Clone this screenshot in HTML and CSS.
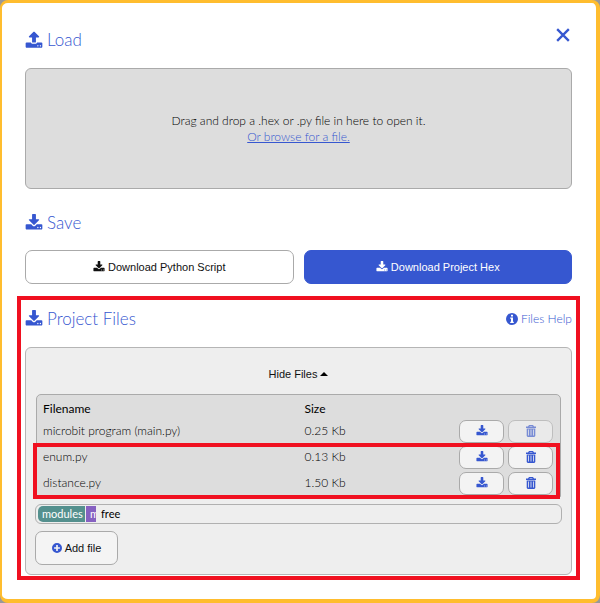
FILE: index.html
```
<!DOCTYPE html>
<html lang="en">
<head>
    <meta charset="UTF-8">
    <meta name="viewport" content="width=device-width, initial-scale=1.0">
    <title>Load / Save</title>
    <link rel="stylesheet" href="styles.css">
</head>
<body>
    <svg class="sprite" aria-hidden="true">
        <symbol id="download" viewBox="0 0 1792 1792">
            <path d="M1344 1344q0-26-19-45t-45-19-45 19-19 45 19 45 45 19 45-19 19-45zm256 0q0-26-19-45t-45-19-45 19-19 45 19 45 45 19 45-19 19-45zm128-224v320q0 40-28 68t-68 28h-1472q-40 0-68-28t-28-68v-320q0-40 28-68t68-28h465l135 136q58 56 136 56t136-56l136-136h464q40 0 68 28t28 68zm-325-569q17 41-14 70l-448 448q-18 19-45 19t-45-19l-448-448q-31-29-14-70 17-39 59-39h256v-448q0-26 19-45t45-19h256q26 0 45 19t19 45v448h256q42 0 59 39z"/>
        </symbol>
        <symbol id="upload" viewBox="0 0 1792 1792">
            <path d="M1344 1472q0-26-19-45t-45-19-45 19-19 45 19 45 45 19 45-19 19-45zm256 0q0-26-19-45t-45-19-45 19-19 45 19 45 45 19 45-19 19-45zm128-224v320q0 40-28 68t-68 28h-1472q-40 0-68-28t-28-68v-320q0-40 28-68t68-28h427q21 56 70.5 92t110.5 36h256q61 0 110.5-36t70.5-92h427q40 0 68 28t28 68zm-325-648q-17 40-59 40h-256v448q0 26-19 45t-45 19h-256q-26 0-45-19t-19-45v-448h-256q-42 0-59-40-17-39 14-69l448-448q18-19 45-19t45 19l448 448q31 30 14 69z"/>
        </symbol>
        <symbol id="trash" viewBox="0 0 12 12">
            <path fill-rule="evenodd" d="M4 0h4l1 1.6h2V3H1V1.6h2zM4.800 .9l-.4.7h3.200l-.4-.7zM1.700 3.400h8.600V11l-1 1H2.700l-1-1zM3.200 4.600v6H4v-6zM5.600 4.600v6h.8v-6zM8 4.600v6h.8v-6z"/>
        </symbol>
        <symbol id="info" viewBox="0 0 12 12">
            <path fill-rule="evenodd" d="M6 0a6 6 0 1 1 0 12A6 6 0 0 1 6 0zM5 1.800v1.700h2V1.800zM4.200 4.500v1.200H5v3h-.8V10h3.600V8.700H7V4.500z"/>
        </symbol>
        <symbol id="plus" viewBox="0 0 12 12">
            <path fill-rule="evenodd" d="M6 0a6 6 0 1 1 0 12A6 6 0 0 1 6 0zM5 2.500V5H2.500v2H5v2.500h2V7h2.500V5H7V2.500z"/>
        </symbol>
    </svg>

    <main class="modal">
        <button class="close" aria-label="Close">
            <svg viewBox="0 0 12 12"><path d="M1 1l10 10M11 1L1 11"/></svg>
        </button>

        <section>
            <h2><svg class="icon-lg"><use href="#upload"/></svg>Load</h2>
            <div class="drop-zone">
                <p>Drag and drop a .hex or .py file in here to open it.</p>
                <a href="#">Or browse for a file.</a>
            </div>
        </section>

        <section>
            <h2><svg class="icon-lg"><use href="#download"/></svg>Save</h2>
            <div class="save-buttons">
                <button class="btn"><svg class="icon"><use href="#download"/></svg>Download Python Script</button>
                <button class="btn btn-primary"><svg class="icon"><use href="#download"/></svg>Download Project Hex</button>
            </div>
        </section>

        <section class="project highlight">
            <div class="project-header">
                <h2><svg class="icon-lg"><use href="#download"/></svg>Project Files</h2>
                <a class="help" href="#"><svg class="icon"><use href="#info"/></svg>Files Help</a>
            </div>
            <div class="panel">
                <button class="toggle">Hide Files <span class="caret"></span></button>
                <div class="table-box">
                    <table>
                        <thead>
                            <tr><th class="name">Filename</th><th>Size</th><th class="actions"></th></tr>
                        </thead>
                        <tbody>
                            <tr>
                                <td>microbit program (main.py)</td>
                                <td>0.25 Kb</td>
                                <td class="actions"><div>
                                    <button aria-label="Download main.py"><svg class="icon"><use href="#download"/></svg></button>
                                    <button aria-label="Delete main.py" disabled><svg class="icon"><use href="#trash"/></svg></button>
                                </div></td>
                            </tr>
                        </tbody>
                        <tbody class="highlight">
                            <tr>
                                <td>enum.py</td>
                                <td>0.13 Kb</td>
                                <td class="actions"><div>
                                    <button aria-label="Download enum.py"><svg class="icon"><use href="#download"/></svg></button>
                                    <button aria-label="Delete enum.py"><svg class="icon"><use href="#trash"/></svg></button>
                                </div></td>
                            </tr>
                            <tr>
                                <td>distance.py</td>
                                <td>1.50 Kb</td>
                                <td class="actions"><div>
                                    <button aria-label="Download distance.py"><svg class="icon"><use href="#download"/></svg></button>
                                    <button aria-label="Delete distance.py"><svg class="icon"><use href="#trash"/></svg></button>
                                </div></td>
                            </tr>
                        </tbody>
                    </table>
                </div>
                <div class="storage">
                    <span class="modules">modules</span>
                    <span class="main">m</span>
                    <span class="free">free</span>
                </div>
                <button class="btn add"><svg class="icon"><use href="#plus"/></svg>Add file</button>
            </div>
        </section>
    </main>
</body>
</html>
```

FILE: styles.css
```
* {
    box-sizing: border-box;
}
body {
    margin: 0;
    background: #999;
    color: #000;
    font-family: Lato, "Open Sans", sans-serif;
    font-size: 12px;
    font-weight: 300;
    line-height: 16px;
}
.sprite {
    display: none;
}
.modal {
    position: relative;
    min-height: 100vh;
    padding: 24px 24px 23px 23px;
    background: #fff;
    border: solid #ffbd2e;
    border-width: 3px 4px 4px 2px;
    border-radius: 8px;
}
h2 {
    display: flex;
    align-items: center;
    gap: 4px;
    margin: 0;
    color: #3657d0;
    font-size: 17px;
    font-weight: 300;
    line-height: 26px;
}
a {
    color: #3657d0;
}
button {
    padding: 0;
    color: #111;
    font-family: "Liberation Sans", Arial, sans-serif;
    font-size: 11px;
    cursor: pointer;
}
.icon, .icon-lg {
    flex: none;
    width: 12px;
    height: 12px;
    fill: currentColor;
}
.icon-lg {
    width: 18px;
    height: 18px;
}
.close {
    position: absolute;
    top: 25px;
    right: 26px;
    width: 14px;
    height: 14px;
    background: none;
    border: 0;
}
.close svg {
    display: block;
    stroke: #3657d0;
    stroke-width: 2;
}
.drop-zone {
    display: flex;
    flex-direction: column;
    align-items: center;
    justify-content: center;
    height: 121px;
    margin: 15px 0 21px;
    background: #ddd;
    border: 1px solid #aaa;
    border-radius: 6px;
}
.drop-zone p {
    margin: 0;
}
.save-buttons {
    display: flex;
    gap: 10px;
    margin: 14px 0 22px;
}
.btn {
    display: flex;
    flex: 1;
    align-items: center;
    justify-content: center;
    gap: 3px;
    height: 34px;
    background: #fff;
    border: 1px solid #aaa;
    border-radius: 7px;
}
.btn-primary {
    background: #3657d0;
    border-color: #3657d0;
    color: #fff;
}

/* Red callout frames */
.highlight {
    position: relative;
}
.highlight::after {
    content: "";
    position: absolute;
    inset: -10px -8px -5px -8px;
    border: 4px solid #f01020;
    pointer-events: none;
}
tbody.highlight::after {
    inset: -1px 0 -3px -4px;
}

.project-header {
    display: flex;
    align-items: center;
    justify-content: space-between;
    margin-bottom: 15px;
}
.help {
    display: flex;
    align-items: center;
    gap: 3px;
    text-decoration: none;
}
.panel {
    padding: 15px 9px 9px;
    background: #eee;
    border: 1px solid #b5b5b5;
    border-radius: 6px;
}
.toggle {
    display: block;
    height: 22px;
    margin: 0 auto 9px;
    background: none;
    border: 0;
}
.caret {
    display: inline-block;
    border: 4px solid transparent;
    border-top: 0;
    border-bottom-color: #000;
    vertical-align: 2px;
}
.table-box {
    padding: 5px 0 0;
    margin: 0 1px;
    background: #ddd;
    border: 1px solid #aaa;
    border-radius: 5px 5px 0 0;
}
table {
    width: 100%;
    border-collapse: collapse;
    table-layout: fixed;
}
th, td {
    height: 26px;
    padding: 0 0 0 6px;
    text-align: left;
}
th {
    height: 18px;
    color: #000;
    font-weight: 400;
}
.name {
    width: 50%;
}
th.actions {
    width: 107px;
}
.actions div {
    display: flex;
    gap: 4px;
}
.actions button {
    display: flex;
    align-items: center;
    justify-content: center;
    width: 45px;
    height: 23px;
    background: #f3f3f3;
    border: 1px solid #aaa;
    border-radius: 7px;
    color: #3657d0;
}
.actions button:disabled {
    opacity: 0.6;
}
.storage {
    display: flex;
    gap: 1px;
    height: 20px;
    margin: 7px 0;
    padding: 1px 2px;
    border: 1px solid #b0b0b0;
    border-radius: 6px;
    font-size: 11px;
    font-weight: 400;
}
.storage span {
    overflow: hidden;
    padding: 0 4px;
}
.storage .modules {
    width: 47px;
    background: #54908e;
    border-radius: 5px 0 0 5px;
    color: #fff;
}
.storage .main {
    width: 10px;
    padding-right: 0;
    background: #8661c1;
    color: #fff;
}
.add {
    width: 83px;
    background: #f4f4f4;
}
.add .icon {
    width: 10px;
    height: 10px;
    color: #3657d0;
}
```
